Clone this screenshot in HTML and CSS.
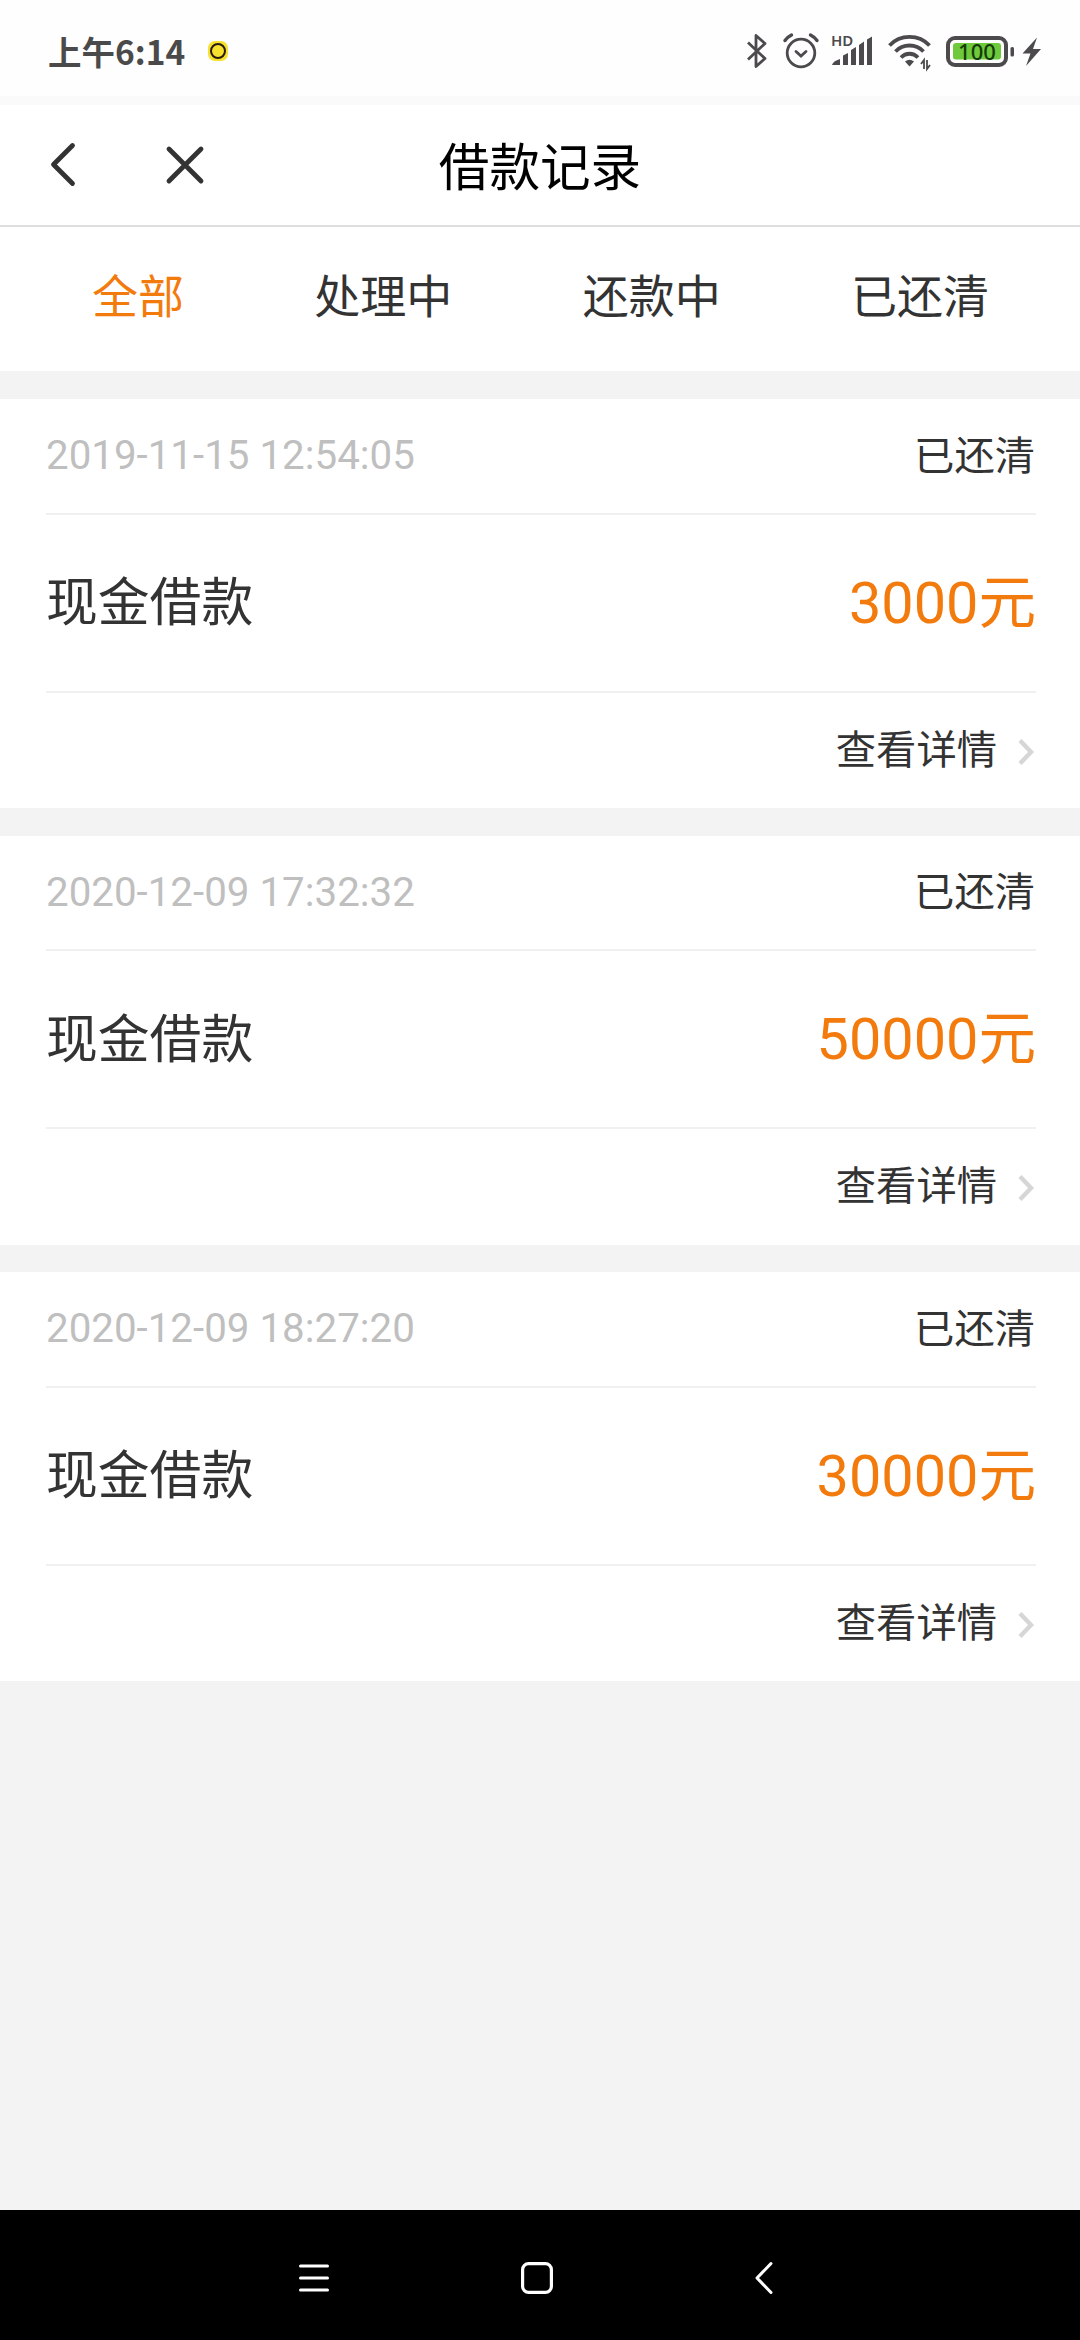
FILE: index.html
```
<!DOCTYPE html>
<html lang="zh-CN">
<head>
    <meta charset="UTF-8">
    <meta name="viewport" content="width=device-width, initial-scale=1.0">
    <title>借款记录</title>
    <link rel="stylesheet" href="styles.css">
</head>
<body>

    <!-- 状态栏 -->
    <div class="status-bar">
        <span class="time">上午6:14</span>
        <span class="dot"></span>
        <div class="status-icons">
            <svg class="bluetooth" viewBox="0 0 22 36" width="22" height="36">
                <path d="M2 9.5L19 25.5L10 33.5V2.5L19 10.5L2 26.5" fill="none" stroke="#4c4a4d" stroke-width="2.8" stroke-linejoin="round"/>
            </svg>
            <svg class="alarm" viewBox="0 0 36 36" width="36" height="36">
                <g fill="none" stroke="#4c4a4d" stroke-width="2.8" stroke-linecap="round">
                    <circle cx="18" cy="20" r="13.8"/>
                    <path d="M13 18.5L18 23L23 18.5"/>
                    <path d="M2 7.5Q4.5 4 8.5 2M34 7.5Q31.5 4 27.5 2" stroke-width="3.4"/>
                </g>
            </svg>
            <svg class="signal" viewBox="0 0 42 36" width="42" height="36">
                <text x="0" y="13" class="hd">HD</text>
                <g fill="#4c4a4d">
                    <path d="M1 32Q2 28 9 26V32Z"/>
                    <path d="M12 32V22.5L17 20V32Z"/>
                    <path d="M20 32V17L25 14V32Z"/>
                    <path d="M28 32V12L33 8.5V32Z"/>
                    <path d="M36 32V6.5L41 3.5V32Z"/>
                </g>
            </svg>
            <svg class="wifi" viewBox="0 0 44 36" width="44" height="36">
                <g fill="none" stroke="#4c4a4d" stroke-width="3.8">
                    <path d="M1.5 12.5C12 1 31 1 41.5 12.5"/>
                    <path d="M7.5 18.5C15 10.5 28 10.5 35.5 18.5"/>
                    <path d="M13 24.5C18 19.5 25 19.5 30 24.5"/>
                </g>
                <path d="M17 28.5Q21.500 25 26 28.500L21.5 33.5Z" fill="#4c4a4d"/>
                <path d="M33 31L36 27V36M39 27V36L42 32" fill="none" stroke="#4c4a4d" stroke-width="1.8"/>
            </svg>
            <svg class="battery" viewBox="0 0 69 32" width="69" height="32">
                <rect x="2" y="2" width="58" height="27" rx="7" fill="none" stroke="#4c4a4d" stroke-width="4"/>
                <rect x="7" y="7" width="48" height="16.5" rx="3" fill="#6fca3b"/>
                <rect x="64.5" y="11" width="3.5" height="9.5" rx="1.5" fill="#4c4a4d"/>
                <text x="31" y="23.5" class="level">100</text>
            </svg>
            <svg class="bolt" viewBox="0 0 20 30" width="20" height="30">
                <path d="M15 0.5L0.5 16.5H8.5L4 29L19 12H11Z" fill="#4c4a4d"/>
            </svg>
        </div>
    </div>

    <!-- 标题栏 -->
    <div class="navbar">
        <div class="nav-buttons">
            <svg viewBox="0 0 26 44" width="26" height="44">
                <path d="M22.5 2.5L3.5 21.5L22.5 40.5" fill="none" stroke="#333" stroke-width="4.8" stroke-linecap="round" stroke-linejoin="round"/>
            </svg>
            <svg viewBox="0 0 38 38" width="38" height="38">
                <path d="M3 3L35 35M35 3L3 35" fill="none" stroke="#333" stroke-width="4.8" stroke-linecap="round"/>
            </svg>
        </div>
        <h1 class="title">借款记录</h1>
    </div>

    <!-- 状态筛选 -->
    <div class="tabs">
        <div class="tab active">全部</div>
        <div class="tab">处理中</div>
        <div class="tab">还款中</div>
        <div class="tab">已还清</div>
    </div>

    <!-- 借款列表 -->
    <div class="list">
        <div class="card">
            <div class="card-head">
                <span class="date">2019-11-15 12:54:05</span>
                <span class="state">已还清</span>
            </div>
            <div class="card-body">
                <span class="name">现金借款</span>
                <span class="amount">3000元</span>
            </div>
            <div class="card-foot">
                <span class="detail">查看详情</span>
                <svg class="arrow" viewBox="0 0 16 26" width="16" height="26">
                    <path d="M2 1.5L13 13L2 24.5" fill="none" stroke="#d6d6d6" stroke-width="4.4"/>
                </svg>
            </div>
        </div>
        <div class="card">
            <div class="card-head">
                <span class="date">2020-12-09 17:32:32</span>
                <span class="state">已还清</span>
            </div>
            <div class="card-body">
                <span class="name">现金借款</span>
                <span class="amount">50000元</span>
            </div>
            <div class="card-foot">
                <span class="detail">查看详情</span>
                <svg class="arrow" viewBox="0 0 16 26" width="16" height="26">
                    <path d="M2 1.5L13 13L2 24.5" fill="none" stroke="#d6d6d6" stroke-width="4.4"/>
                </svg>
            </div>
        </div>
        <div class="card">
            <div class="card-head">
                <span class="date">2020-12-09 18:27:20</span>
                <span class="state">已还清</span>
            </div>
            <div class="card-body">
                <span class="name">现金借款</span>
                <span class="amount">30000元</span>
            </div>
            <div class="card-foot">
                <span class="detail">查看详情</span>
                <svg class="arrow" viewBox="0 0 16 26" width="16" height="26">
                    <path d="M2 1.5L13 13L2 24.5" fill="none" stroke="#d6d6d6" stroke-width="4.4"/>
                </svg>
            </div>
        </div>
    </div>

    <!-- 系统导航键 -->
    <div class="system-bar">
        <svg class="key-menu" viewBox="0 0 30 36" width="30" height="36">
            <path d="M1.5 6H28.5M1.5 18H28.5M1.5 30H28.5" stroke="#fff" stroke-width="3" stroke-linecap="round"/>
        </svg>
        <svg class="key-home" viewBox="0 0 32 36" width="32" height="36">
            <rect x="1.6" y="3.6" width="28.8" height="28.8" rx="6" fill="none" stroke="#fff" stroke-width="3.2"/>
        </svg>
        <svg class="key-back" viewBox="0 0 18 36" width="18" height="36">
            <path d="M16 3.5L2 18L16 32.5" fill="none" stroke="#fff" stroke-width="3" stroke-linecap="round" stroke-linejoin="round"/>
        </svg>
    </div>

</body>
</html>
```
FILE: styles.css
```
* {
    box-sizing: border-box;
}

body {
    font-family: Roboto, "Noto Sans CJK SC", sans-serif;
    background-color: #f3f3f3;
    color: #333;
    margin: 0;
    padding: 0;
    height: 2340px;
    display: flex;
    flex-direction: column;
}

svg {
    display: block;
    flex: none;
    overflow: visible;
}

/* 状态栏 */
.status-bar {
    height: 105px;
    padding: 0 38px 0 48px;
    display: flex;
    align-items: flex-start;
    background-color: #fefefe;
    border-bottom: 9px solid #fafafa;
}

.time {
    margin-top: 26px;
    font-family: "Noto Sans CJK SC", sans-serif;
    font-size: 33.5px;
    line-height: 50px;
    font-weight: 700;
    color: #4a4a4a;
}

.dot {
    width: 20px;
    height: 20px;
    margin: 41px 0 0 23px;
    border-radius: 7px;
    background: #f5e12e;
    display: flex;
    align-items: center;
    justify-content: center;
}

.dot::after {
    content: "";
    width: 12px;
    height: 12px;
    border: 2.5px solid #2b1a10;
    border-radius: 50%;
}

.status-icons {
    display: flex;
    align-items: flex-start;
    margin: 33px 0 0 auto;
}

.alarm {
    margin-left: 15px;
}

.signal {
    margin-left: 12px;
}

.wifi {
    margin-left: 15px;
}

.battery {
    margin: 3px 0 0 14px;
}

.bolt {
    margin: 4px 0 0 7px;
}

.hd {
    font-family: "Noto Sans", sans-serif;
    font-size: 15px;
    font-weight: 600;
    fill: #4c4a4d;
}

.level {
    font-family: "Noto Sans", sans-serif;
    font-size: 22px;
    font-weight: 500;
    text-anchor: middle;
    fill: #153d0c;
}

/* 标题栏 */
.navbar {
    height: 122px;
    display: grid;
    grid-template-columns: 1fr auto 1fr;
    align-items: center;
    background-color: #fff;
    border-bottom: 2px solid #dedede;
}

.nav-buttons {
    display: flex;
    align-items: center;
    gap: 90px;
    padding-left: 50px;
}

.title {
    margin: 0;
    padding-top: 7px;
    font-size: 50.6px;
    line-height: 74px;
    font-weight: 400;
    color: #000;
}

/* 状态筛选 */
.tabs {
    height: 144px;
    padding: 0 91px 4px 92px;
    display: flex;
    justify-content: space-between;
    align-items: center;
    background-color: #fff;
}

.tab {
    font-size: 46px;
    line-height: 66px;
}

.tab.active {
    color: #f37b0e;
}

/* 借款列表 */
.list {
    flex: 1;
    display: flex;
    flex-direction: column;
    gap: 27.5px;
    padding-top: 28px;
}

.card {
    height: 409px;
    padding: 0 44px 0 46px;
    background-color: #fff;
}

.card-head,
.card-body,
.card-foot {
    display: flex;
    justify-content: space-between;
    align-items: center;
}

.card-head {
    height: 115.5px;
    border-bottom: 2px solid #f0f0f0;
    font-size: 40.3px;
}

.card-body {
    height: 178px;
    border-bottom: 2px solid #f0f0f0;
}

.card-foot {
    height: 115.5px;
    justify-content: flex-end;
    font-size: 40.3px;
}

.date {
    color: #bfbfbf;
}

.state {
    padding: 0 1px 7px 0;
}

.name {
    padding-bottom: 8px;
    font-size: 51.8px;
}

.amount {
    padding-bottom: 10px;
    font-size: 57.6px;
    color: #f37b0e;
}

.detail {
    padding-bottom: 8px;
}

.arrow {
    margin: 3px 2px 0 21px;
}

/* 系统导航键 */
.system-bar {
    height: 130px;
    padding: 6px 0 0 299px;
    display: flex;
    align-items: center;
    background-color: #000;
}

.key-home {
    margin-left: 192px;
}

.key-back {
    margin-left: 202px;
}
```
